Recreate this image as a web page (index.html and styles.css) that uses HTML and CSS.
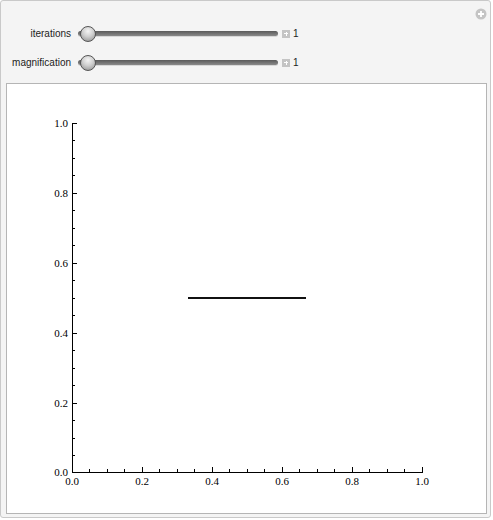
FILE: index.html
```html
<!DOCTYPE html>
<html>
<head>
<meta charset="utf-8">
<link rel="stylesheet" href="styles.css">
</head>
<body>
<div class="panel">
  <svg class="corner-plus" width="12" height="12" viewBox="0 0 12 12">
    <circle cx="6" cy="6" r="5.5" fill="#c4c4c4"/>
    <path d="M3 6h6M6 3v6" stroke="#fff" stroke-width="1.8"/>
  </svg>
  <div class="controls">
    <div class="row">
      <span class="label">iterations</span>
      <div class="slider"><div class="track"></div><div class="thumb"></div></div>
      <span class="pbox"></span>
      <span class="val">1</span>
    </div>
    <div class="row">
      <span class="label">magnification</span>
      <div class="slider"><div class="track"></div><div class="thumb"></div></div>
      <span class="pbox"></span>
      <span class="val">1</span>
    </div>
  </div>
  <div class="plot">
    <svg width="479" height="429" viewBox="7 84 479 429" class="chart">
      <g stroke="#000" stroke-width="1" fill="none" shape-rendering="crispEdges">
        <path d="M72.5 123V472.5H422.5"/>
        <path d="M72 123.5h5M72 193.5h5M72 263.5h5M72 333.5h5M72 403.5h5"/>
        <path d="M72 140.5h3M72 158.5h3M72 175.5h3M72 210.5h3M72 228.5h3M72 245.5h3M72 280.5h3M72 298.5h3M72 315.5h3M72 350.5h3M72 368.5h3M72 385.5h3M72 420.5h3M72 438.5h3M72 455.5h3"/>
        <path d="M142.5 472v-5M212.5 472v-5M282.5 472v-5M352.5 472v-5M422.5 472v-5"/>
        <path d="M89.5 472v-3M107.5 472v-3M124.5 472v-3M159.5 472v-3M177.5 472v-3M194.5 472v-3M229.5 472v-3M247.5 472v-3M264.5 472v-3M299.5 472v-3M317.5 472v-3M334.5 472v-3M369.5 472v-3M387.5 472v-3M404.5 472v-3"/>
      </g>
      <path d="M188 297.5H305.5" stroke="#111" stroke-width="2" shape-rendering="crispEdges"/>
      <g class="ylab" text-anchor="end">
        <text x="68" y="127">1.0</text>
        <text x="68" y="197">0.8</text>
        <text x="68" y="267">0.6</text>
        <text x="68" y="337">0.4</text>
        <text x="68" y="407">0.2</text>
        <text x="68" y="476">0.0</text>
      </g>
      <g class="xlab" text-anchor="middle">
        <text x="72" y="485">0.0</text>
        <text x="142" y="485">0.2</text>
        <text x="212" y="485">0.4</text>
        <text x="282" y="485">0.6</text>
        <text x="352" y="485">0.8</text>
        <text x="422" y="485">1.0</text>
      </g>
    </svg>
  </div>
</div>
</body>
</html>
```
FILE: styles.css
```css
html, body {
  margin: 0;
  padding: 0;
  background: #ffffff;
}
.panel {
  position: relative;
  box-sizing: border-box;
  width: 491px;
  height: 518px;
  background: #f4f4f4;
  border: 1px solid #c9c9c9;
  border-radius: 3px;
  padding: 18px 3px 3px 5px;
  font-family: "Liberation Sans", Arial, sans-serif;
}
.corner-plus {
  position: absolute;
  top: 7px;
  right: 3px;
}
.controls {
  display: flex;
  flex-direction: column;
}
.row {
  display: flex;
  align-items: center;
  height: 29px;
}
.label {
  width: 65px;
  text-align: right;
  font-size: 10px;
  color: #222;
  padding-right: 7px;
  box-sizing: content-box;
}
.slider {
  position: relative;
  width: 200px;
  height: 18px;
  display: flex;
  align-items: center;
}
.track {
  width: 200px;
  height: 5px;
  border-radius: 3px;
  background: linear-gradient(#5a5a5a, #8a8a8a);
  box-shadow: 0 1px 0 #d8d8d8;
}
.thumb {
  position: absolute;
  left: 2px;
  top: 1px;
  width: 16px;
  height: 16px;
  box-sizing: border-box;
  border-radius: 50%;
  border: 1px solid #555;
  background: radial-gradient(circle at 50% 30%, #f4f4f4 0%, #cfcfcf 45%, #8c8c8c 100%);
}
.pbox {
  width: 8px;
  height: 8px;
  margin-left: 4px;
  background:
    linear-gradient(#fff, #fff) center / 4px 1px no-repeat,
    linear-gradient(#fff, #fff) center / 1px 4px no-repeat,
    #c4c4c4;
}
.val {
  font-size: 10px;
  color: #222;
  margin-left: 3px;
}
.plot {
  margin-top: 6px;
  box-sizing: border-box;
  width: 481px;
  height: 431px;
  background: #fff;
  border: 1px solid #b5b5b5;
}
.chart {
  display: block;
}
.chart text {
  font-family: "Liberation Serif", "Times New Roman", serif;
  font-size: 11px;
  fill: #000;
}
```
